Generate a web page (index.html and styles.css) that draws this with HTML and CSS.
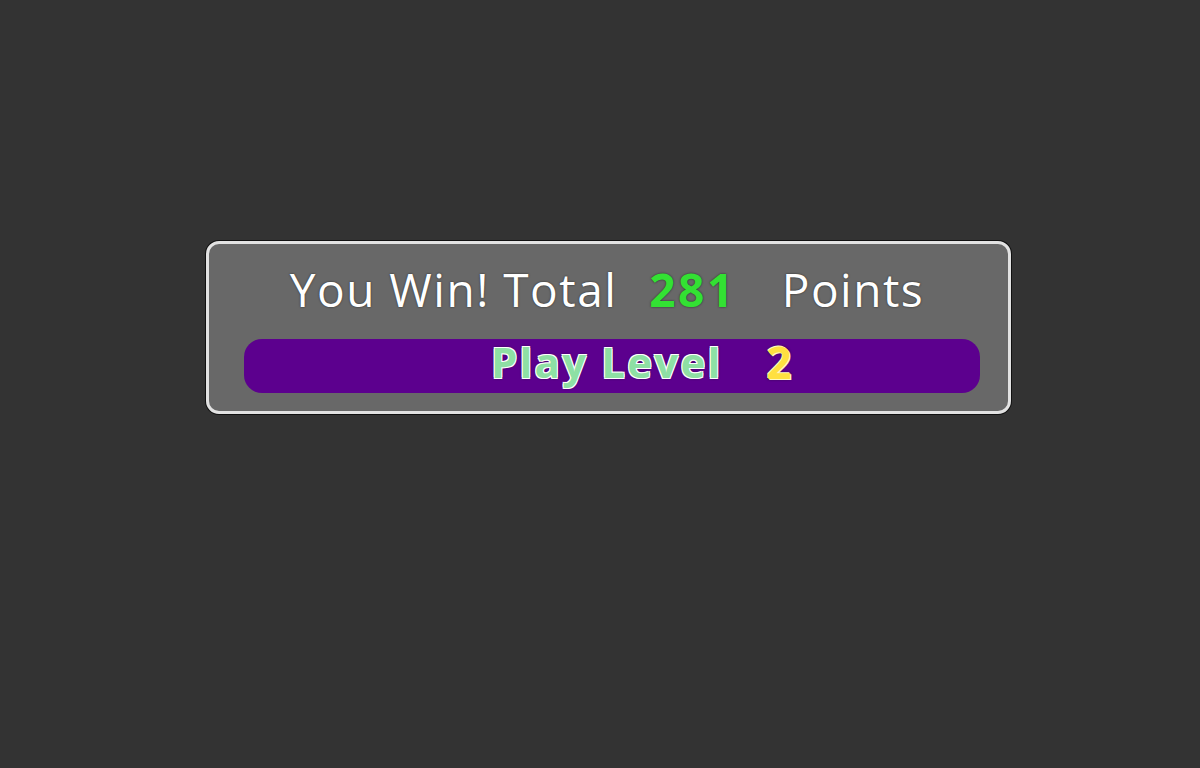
FILE: index.html
```html
<!DOCTYPE html>
<html>
<head>
<meta charset="utf-8">
<link rel="stylesheet" href="styles.css">
</head>
<body>
<div class="panel">
  <div class="title">
    <span class="t-win">You Win! Total</span>
    <span class="t-score">281</span>
    <span class="t-points">Points</span>
  </div>
  <div class="play">
    <span class="p-label">Play Level</span>
    <span class="p-num">2</span>
  </div>
</div>
</body>
</html>
```
FILE: styles.css
```css
html, body {
  margin: 0;
  padding: 0;
  background: #333333;
  width: 1200px;
  height: 768px;
  overflow: hidden;
  font-family: "Open Sans", "Noto Sans", sans-serif;
}
.panel {
  box-sizing: border-box;
  margin: 241px 0 0 206px;
  width: 805px;
  height: 173px;
  background: #686868;
  border: 3px solid #e2e2e2;
  border-radius: 13px;
  box-shadow: 0 0 0 1px #111;
  display: flex;
  flex-direction: column;
  padding: 0 28px 0 35px;
}
.title {
  display: flex;
  align-items: baseline;
  justify-content: center;
  height: 90px;
  line-height: 90px;
  color: #ffffff;
  font-size: 46px;
  letter-spacing: 1.5px;
  text-shadow: 0 0 2px #222;
  padding-right: 10px;
}
.t-score {
  color: #33e133;
  font-weight: 700;
  margin-left: 32px;
  letter-spacing: 2.5px;
}
.t-points {
  margin-left: 46px;
}
.play {
  margin-top: 5px;
  height: 54px;
  background: #5c008e;
  border-radius: 18px;
  display: flex;
  align-items: flex-start;
  justify-content: flex-start;
  padding-left: 247px;
  font-weight: 700;
  font-size: 42px;
  line-height: 46px;
}
.p-label {
  color: #8ee0a4;
  letter-spacing: 2.2px;
  text-shadow: 1px 1px 0 #fff, -1px -1px 0 #fff, 1px -1px 0 #fff, -1px 1px 0 #fff, 0 0 3px #111;
}
.p-num {
  margin-left: 44px;
  font-size: 44px;
  color: #ffe040;
  text-shadow: 1px 1px 0 #fff8c0, -1px -1px 0 #fff8c0, 0 0 3px #111;
}
```
